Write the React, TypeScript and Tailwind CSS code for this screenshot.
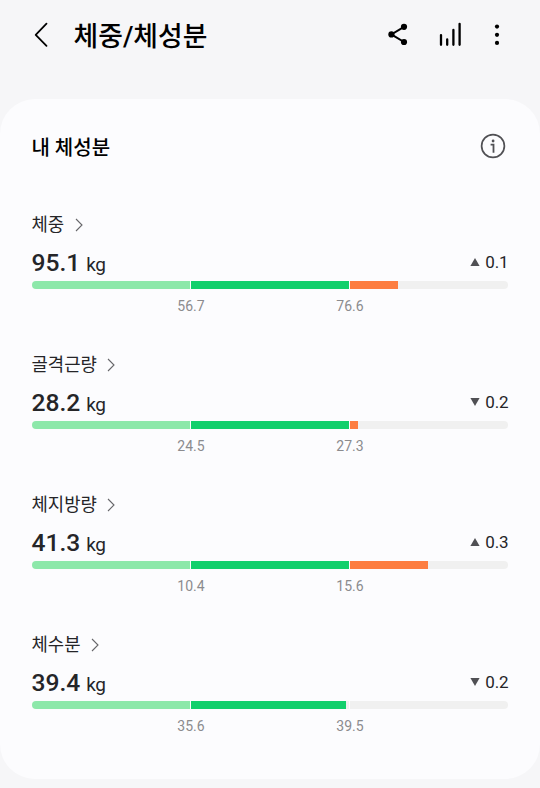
import React from "react";
import clsx from "clsx";

interface Metric {
  name: string;
  value: string;
  change: string;
  isUp: boolean;
  limits: [string, string];
  // Porcentaje lleno de cada tramo: bajo, normal, alto
  fill: [number, number, number];
}

const METRICS: Metric[] = [
  {
    name: "체중",
    value: "95.1",
    change: "0.1",
    isUp: true,
    limits: ["56.7", "76.6"],
    fill: [100, 100, 30.4],
  },
  {
    name: "골격근량",
    value: "28.2",
    change: "0.2",
    isUp: false,
    limits: ["24.5", "27.3"],
    fill: [100, 100, 5.2],
  },
  {
    name: "체지방량",
    value: "41.3",
    change: "0.3",
    isUp: true,
    limits: ["10.4", "15.6"],
    fill: [100, 100, 49.2],
  },
  {
    name: "체수분",
    value: "39.4",
    change: "0.2",
    isUp: false,
    limits: ["35.6", "39.5"],
    fill: [100, 97.9, 0],
  },
];

const SEGMENT_COLORS = ["bg-[#8de8aa]", "bg-[#12cf6c]", "bg-[#fd7d40]"];

function Header() {
  return (
    <header className="flex h-[70px] items-center pl-[33px] pr-[40px] text-black">
      <button aria-label="뒤로" className="h-[26px] w-4">
        <svg width="16" height="26" viewBox="0 0 16 26" fill="none">
          <path
            d="M13.5 1.7 2.7 12.8 13.5 23.9"
            stroke="currentColor"
            strokeWidth="1.8"
            strokeLinecap="round"
            strokeLinejoin="round"
          />
        </svg>
      </button>
      <h1 className="ml-[24.6px] mt-[3px] text-[26.8px] leading-[40px] font-medium">
        체중/체성분
      </h1>
      <div className="ml-auto flex items-center">
        <button aria-label="공유">
          <svg width="20" height="24" viewBox="0 0 20 24">
            <path
              d="M16 3.8 3.4 11.4 16 19"
              fill="none"
              stroke="currentColor"
              strokeWidth="2"
            />
            <circle cx="16" cy="3.8" r="3.1" />
            <circle cx="3.4" cy="11.4" r="3.1" />
            <circle cx="16" cy="19" r="3.1" />
          </svg>
        </button>
        <button aria-label="차트" className="ml-[30px]">
          <svg width="24" height="26" viewBox="0 0 24 26">
            <path
              d="M3 13.1V22.8M9.2 17.5V22.8M15.4 8V22.8M21.6 1.8V22.8"
              stroke="currentColor"
              strokeWidth="2.3"
              strokeLinecap="round"
            />
          </svg>
        </button>
        <button aria-label="더보기" className="ml-[32px]">
          <svg width="6" height="24" viewBox="0 0 6 24">
            <circle cx="3" cy="3.6" r="2.1" />
            <circle cx="3" cy="11.8" r="2.1" />
            <circle cx="3" cy="19.9" r="2.1" />
          </svg>
        </button>
      </div>
    </header>
  );
}

function MetricRow({ metric }: { metric: Metric }) {
  return (
    <section className="h-[140px]">
      <div className="flex h-6 items-center text-[17.8px] leading-6 text-[#252528]">
        <h3>{metric.name}</h3>
        <svg className="ml-[10.5px]" width="8" height="14" viewBox="0 0 8 14" fill="none">
          <path d="M1 1 7 7 1 13" stroke="#66666a" strokeWidth="1.1" />
        </svg>
      </div>
      <div className="mt-[9px] flex h-[35px] items-baseline text-[#252528]">
        <span className="text-[24.6px] leading-[34px] font-medium">
          {metric.value}
        </span>
        <span className="ml-[6px] text-[19px] tracking-[-0.4px]">kg</span>
        <div className="ml-auto flex items-center self-start pt-[4px]">
          <svg
            className={clsx("mr-[5px]", !metric.isUp && "rotate-180")}
            width="10"
            height="8"
            viewBox="0 0 10 8"
          >
            <path d="M5 0 9.6 8H.4Z" fill="#505054" />
          </svg>
          <span className="text-[17px] leading-6 tracking-[-0.1px]">
            {metric.change}
          </span>
        </div>
      </div>
      {/* Barra de rango */}
      <div className="flex h-2 gap-px">
        {metric.fill.map((percent, i) => (
          <div
            key={i}
            className="flex-1 overflow-hidden bg-[#f0f0f0] first:rounded-l-full last:rounded-r-full"
          >
            <div
              className={clsx("h-full", SEGMENT_COLORS[i])}
              style={{ width: `${percent}%` }}
            />
          </div>
        ))}
      </div>
      {/* Limites centrados bajo cada division */}
      <div className="mt-[7px] flex justify-center pl-px text-center text-[14px] leading-5 text-[#8b8b8e]">
        <span className="w-[159px]">{metric.limits[0]}</span>
        <span className="w-[159px]">{metric.limits[1]}</span>
      </div>
    </section>
  );
}

export default function App() {
  return (
    <main className="h-[788px] w-[540px] overflow-hidden bg-[#f6f6f8] pb-[9px] font-[Roboto,'Noto_Sans_CJK_KR',sans-serif]">
      <Header />
      <div className="mt-[28.5px] h-[680.5px] rounded-[35px] bg-[#fcfcfe] pl-[31.5px] pr-[31.5px] pt-[33px]">
        <div className="flex h-[30px] items-center justify-between">
          <h2 className="mt-[2px] text-[20px] leading-[30px] font-medium text-black">
            내 체성분
          </h2>
          <button aria-label="정보" className="mr-[3px] -mt-[2px]">
            <svg width="26" height="26" viewBox="0 0 26 26" fill="none">
              <circle cx="13" cy="13" r="11.4" stroke="#505054" strokeWidth="1.7" />
              <circle cx="13.1" cy="8" r="1.4" fill="#505054" />
              <path d="M10.6 11.7H13.5V19.8" stroke="#505054" strokeWidth="1.8" />
            </svg>
          </button>
        </div>
        <div className="mt-[51.5px]">
          {METRICS.map((metric) => (
            <MetricRow key={metric.name} metric={metric} />
          ))}
        </div>
      </div>
    </main>
  );
}
